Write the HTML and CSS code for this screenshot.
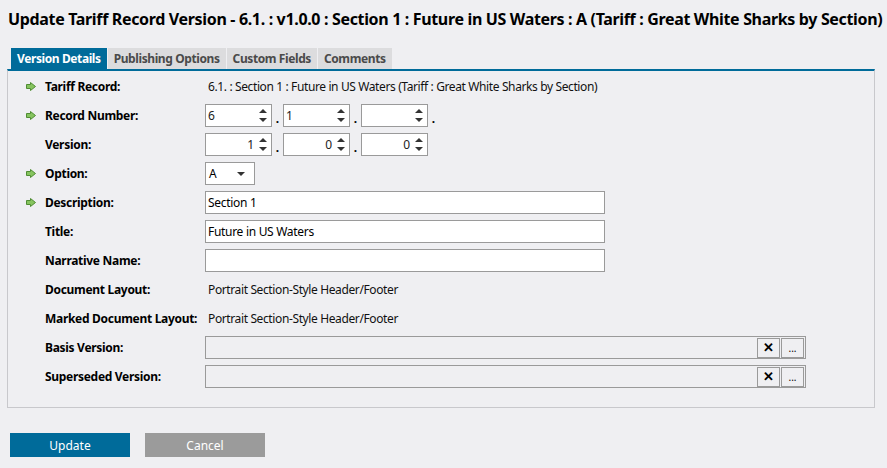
FILE: index.html
```html
<!DOCTYPE html>
<html>
<head>
<meta charset="utf-8">
<link rel="stylesheet" href="styles.css">
</head>
<body>
<div class="page">
  <h1 class="title">Update Tariff Record Version - 6.1. : v1.0.0 : Section 1 : Future in US Waters : A (Tariff : Great White Sharks by Section)</h1>
  <div class="tabs">
    <div class="tab active">Version Details</div>
    <div class="tab">Publishing Options</div>
    <div class="tab">Custom Fields</div>
    <div class="tab">Comments</div>
  </div>
  <div class="panel">
    <div class="row">
      <span class="req"><svg width="10" height="9" viewBox="0 0 10 9"><path d="M0.5 2.5H4.5V0.5L9.5 4.5L4.5 8.5V6.5H0.5Z" fill="#86c45f" stroke="#4f8c33" stroke-width="1"/></svg></span>
      <span class="label">Tariff Record:</span>
      <span class="value">6.1. : Section 1 : Future in US Waters (Tariff : Great White Sharks by Section)</span>
    </div>
    <div class="row">
      <span class="req"><svg width="10" height="9" viewBox="0 0 10 9"><path d="M0.5 2.5H4.5V0.5L9.5 4.5L4.5 8.5V6.5H0.5Z" fill="#86c45f" stroke="#4f8c33" stroke-width="1"/></svg></span>
      <span class="label">Record Number:</span>
      <div class="spins">
        <div class="spin"><span class="num left">6</span><span class="arrows"><span class="up"></span><span class="down"></span></span></div>
        <span class="dot">.</span>
        <div class="spin"><span class="num left">1</span><span class="arrows"><span class="up"></span><span class="down"></span></span></div>
        <span class="dot">.</span>
        <div class="spin"><span class="num left"></span><span class="arrows"><span class="up"></span><span class="down"></span></span></div>
        <span class="dot">.</span>
      </div>
    </div>
    <div class="row">
      <span class="req"></span>
      <span class="label">Version:</span>
      <div class="spins">
        <div class="spin"><span class="num">1</span><span class="arrows"><span class="up"></span><span class="down"></span></span></div>
        <span class="dot">.</span>
        <div class="spin"><span class="num">0</span><span class="arrows"><span class="up"></span><span class="down"></span></span></div>
        <span class="dot">.</span>
        <div class="spin"><span class="num">0</span><span class="arrows"><span class="up"></span><span class="down"></span></span></div>
      </div>
    </div>
    <div class="row">
      <span class="req"><svg width="10" height="9" viewBox="0 0 10 9"><path d="M0.5 2.5H4.5V0.5L9.5 4.5L4.5 8.5V6.5H0.5Z" fill="#86c45f" stroke="#4f8c33" stroke-width="1"/></svg></span>
      <span class="label">Option:</span>
      <div class="select"><span>A</span><span class="caret"></span></div>
    </div>
    <div class="row">
      <span class="req"><svg width="10" height="9" viewBox="0 0 10 9"><path d="M0.5 2.5H4.5V0.5L9.5 4.5L4.5 8.5V6.5H0.5Z" fill="#86c45f" stroke="#4f8c33" stroke-width="1"/></svg></span>
      <span class="label">Description:</span>
      <div class="text">Section 1</div>
    </div>
    <div class="row">
      <span class="req"></span>
      <span class="label">Title:</span>
      <div class="text">Future in US Waters</div>
    </div>
    <div class="row">
      <span class="req"></span>
      <span class="label">Narrative Name:</span>
      <div class="text"></div>
    </div>
    <div class="row">
      <span class="req"></span>
      <span class="label">Document Layout:</span>
      <span class="value">Portrait Section-Style Header/Footer</span>
    </div>
    <div class="row">
      <span class="req"></span>
      <span class="label">Marked Document Layout:</span>
      <span class="value">Portrait Section-Style Header/Footer</span>
    </div>
    <div class="row">
      <span class="req"></span>
      <span class="label">Basis Version:</span>
      <div class="lookup"><span class="fill"></span><span class="btn x">✕</span><span class="btn">...</span></div>
    </div>
    <div class="row">
      <span class="req"></span>
      <span class="label">Superseded Version:</span>
      <div class="lookup"><span class="fill"></span><span class="btn x">✕</span><span class="btn">...</span></div>
    </div>
  </div>
  <div class="actions">
    <button class="primary">Update</button>
    <button class="secondary">Cancel</button>
  </div>
</div>
</body>
</html>
```

FILE: styles.css
```css
html, body {
  margin: 0;
  padding: 0;
  background: #efeff2;
  font-family: "Noto Sans", "Open Sans", sans-serif;
  color: #000;
}
.page {
  width: 887px;
  height: 468px;
  overflow: hidden;
}
.title {
  margin: 0;
  padding: 7px 0 0 8px;
  font-size: 16px;
  font-weight: bold;
  line-height: 24px;
  white-space: nowrap;
  letter-spacing: -0.34px;
}
.tabs {
  display: flex;
  margin: 17px 0 0 11px;
  height: 21px;
  gap: 1px;
}
.tab {
  background: #dcdcde;
  color: #4a4a4a;
  font-size: 12px;
  font-weight: bold;
  line-height: 21px;
  padding: 0 6px;
  letter-spacing: -0.4px;
}
.tab.active {
  background: #006b9a;
  color: #fff;
}
.panel {
  margin-left: 7px;
  width: 866px;
  border-top: 2px solid #006b9a;
  border-left: 1px solid #c8c8cc;
  border-right: 1px solid #c8c8cc;
  border-bottom: 1px solid #c8c8cc;
  padding: 4px 0 19px 0;
  display: flex;
  flex-direction: column;
  gap: 6px;
}
.row {
  display: flex;
  align-items: center;
  height: 23px;
}
.req {
  width: 18px;
  margin-left: 18px;
  display: flex;
  align-items: center;
}
.req svg { display: block; }
.label {
  width: 160px;
  margin-left: 1px;
  font-size: 12px;
  font-weight: bold;
  letter-spacing: -0.3px;
}
.value {
  font-size: 12px;
  letter-spacing: -0.38px;
  color: #111;
  padding-left: 3px;
}
.spins {
  display: flex;
  align-items: center;
  height: 23px;
}
.spin {
  width: 65px;
  height: 21px;
  border: 1px solid #9a9a9a;
  background: #fff;
  display: flex;
  align-items: center;
}
.num {
  flex: 1;
  text-align: right;
  font-size: 12px;
  padding-right: 3px;
  color: #222;
}
.num.left {
  text-align: left;
  padding-left: 2px;
}
.arrows {
  width: 12px;
  height: 19px;
  margin-right: 2px;
  display: flex;
  flex-direction: column;
  justify-content: center;
  align-items: center;
  gap: 5px;
}
.up {
  width: 0; height: 0;
  border-left: 4px solid transparent;
  border-right: 4px solid transparent;
  border-bottom: 4px solid #333;
}
.down {
  width: 0; height: 0;
  border-left: 4px solid transparent;
  border-right: 4px solid transparent;
  border-top: 4px solid #333;
}
.dot {
  width: 11px;
  text-align: center;
  font-size: 12px;
  font-weight: bold;
  align-self: flex-end;
  line-height: 16px;
}
.select {
  height: 21px;
  border: 1px solid #9a9a9a;
  background: #fff;
  display: flex;
  align-items: center;
  justify-content: space-between;
  font-size: 12px;
  padding-left: 3px;
  width: 45px;
}
.caret {
  width: 0; height: 0;
  border-left: 4px solid transparent;
  border-right: 4px solid transparent;
  border-top: 4px solid #333;
  margin-right: 9px;
}
.text {
  width: 396px;
  height: 21px;
  border: 1px solid #9a9a9a;
  background: #fff;
  font-size: 12px;
  line-height: 22px;
  padding-left: 2px;
  letter-spacing: -0.3px;
}
.lookup {
  width: 598px;
  height: 21px;
  border: 1px solid #9a9a9a;
  display: flex;
  align-items: center;
  gap: 1px;
  padding-right: 1px;
}
.fill { flex: 1; }
.btn {
  width: 21px;
  height: 18px;
  border: 1px solid #9a9a9a;
  font-size: 10px;
  display: flex;
  align-items: center;
  justify-content: center;
  line-height: 1;
}
.btn.x {
  font-size: 13px;
  font-weight: bold;
}
.actions {
  display: flex;
  gap: 15px;
  margin: 25px 0 0 10px;
}
button {
  width: 120px;
  height: 24px;
  border: none;
  color: #fff;
  font-family: "Noto Sans", "Open Sans", sans-serif;
  font-size: 12px;
  padding: 0;
}
.primary { background: #006b9a; }
.secondary { background: #9b9b9b; }
```
